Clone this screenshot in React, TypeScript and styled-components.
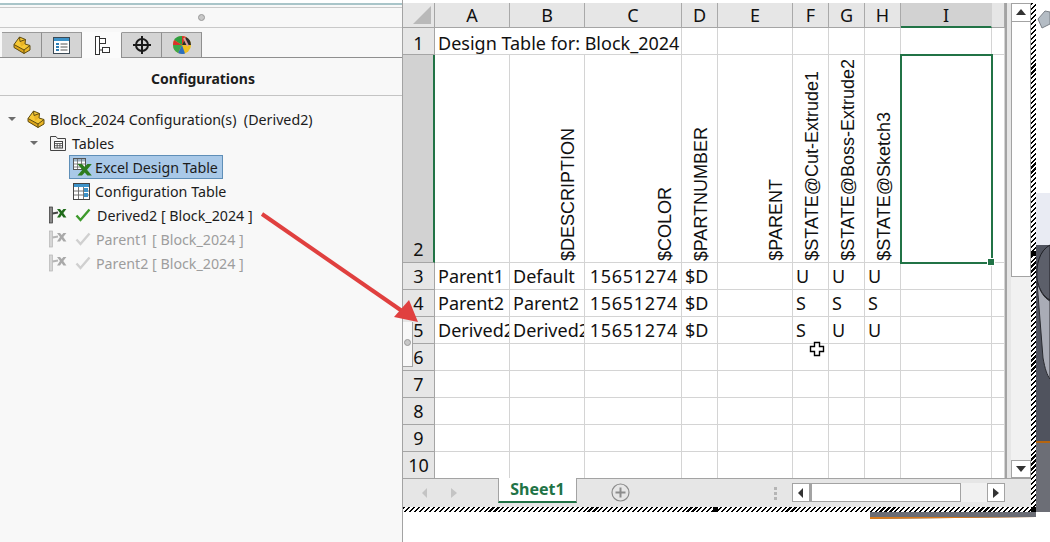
import React from 'react'
import styled, { createGlobalStyle } from 'styled-components'

const GlobalStyle = createGlobalStyle`
    html, body {
        margin: 0;
        padding: 0;
        background: #fff;
        overflow: hidden;
    }
    #root {
        width: 1050px;
        height: 542px;
    }
`

const Page = styled.div`
    position: relative;
    display: flex;
    width: 1050px;
    height: 542px;
    overflow: hidden;
`

/* left feature manager panel */
const Panel = styled.div`
    width: 403px;
    box-sizing: border-box;
    padding-top: 3px;
    background: linear-gradient(#fff 3px, #f8f8f8 3px);
    border-right: 1px solid #a3a3a3;
    font-family: 'Noto Sans', sans-serif;
    color: #1c1c1c;
`

const PanelTop = styled.div`
    height: 5px;
    box-sizing: border-box;
    border-top: 2px solid #a9c5c9;
    border-bottom: 1px solid #c9c9c9;
`

const Grip = styled.div`
    display: flex;
    align-items: center;
    justify-content: center;
    height: 20px;
    box-sizing: border-box;
    border-bottom: 1px solid #c9c9c9;
`

const GripDot = styled.span`
    width: 5px;
    height: 5px;
    border-radius: 50%;
    background: #c8c8c8;
    border: 1px solid #9a9a9a;
`

const TabBar = styled.div`
    display: flex;
    height: 26px;
    margin-top: 4px;
    padding-left: 2px;
    border-bottom: 1px solid #8f8f8f;
    box-sizing: border-box;
`

const Tab = styled.div<{ $active?: boolean }>`
    display: flex;
    align-items: center;
    justify-content: center;
    width: 40px;
    height: ${p => (p.$active ? '26px' : '25px')};
    box-sizing: border-box;
    background: ${p => (p.$active ? '#fbfbfb' : '#d4d4d4')};
    border-top: 1px solid ${p => (p.$active ? '#fbfbfb' : '#9a9a9a')};
    border-right: 1px solid #8f8f8f;
`

const PanelTitle = styled.div`
    height: 38px;
    line-height: 41px;
    box-sizing: border-box;
    padding-left: 4px;
    text-align: center;
    font-size: 14px;
    font-weight: 700;
    border-bottom: 1px solid #c4c4c4;
`

const Tree = styled.div`
    display: flex;
    flex-direction: column;
    padding-top: 11px;
`

const TreeRow = styled.div<{ $indent: number; $muted?: boolean }>`
    display: flex;
    align-items: center;
    height: 24px;
    padding-left: ${p => p.$indent}px;
    font-size: 14.25px;
    white-space: pre;
    color: ${p => (p.$muted ? '#9d9d9d' : '#1c1c1c')};
`

const Caret = styled.span`
    width: 0;
    height: 0;
    margin-right: 11px;
    border-left: 4px solid transparent;
    border-right: 4px solid transparent;
    border-top: 4px solid #6d6d6d;
`

const RowLabel = styled.span<{ $gap: number }>`
    margin-left: ${p => p.$gap}px;
`

const CheckSlot = styled.span`
    display: flex;
    margin-left: 8px;
`

const SelectedItem = styled.div`
    display: flex;
    align-items: center;
    width: 154px;
    height: 24px;
    box-sizing: border-box;
    margin-left: -3px;
    padding-left: 2px;
    background: #a9c9e8;
    border: 1px solid #5f8fb8;
`

/* workspace on the right */
const Workspace = styled.div`
    flex: 1;
    display: flex;
    flex-direction: column;
`

const Stage = styled.div`
    display: flex;
    margin-top: 3px;
    height: 509px;
`

const Hatched = styled.div`
    position: relative;
    width: 633px;
    height: 509px;
    box-sizing: border-box;
    padding: 0 5px 5px 0;
    background: repeating-linear-gradient(135deg, #000 0 1.5px, #fff 1.5px 3.5px);
`

const HatchHandle = styled.span<{ $left: number; $top: number }>`
    position: absolute;
    left: ${p => p.$left}px;
    top: ${p => p.$top}px;
    width: 5px;
    height: 5px;
    background: #000;
`

const ExcelWindow = styled.div`
    position: relative;
    display: flex;
    flex-direction: column;
    width: 628px;
    height: 504px;
    background: #e6e6e6;
    overflow: hidden;
`

const ExcelMain = styled.div`
    display: flex;
    height: 475px;
`

const SheetGrid = styled.div`
    position: relative;
    display: grid;
    grid-template-columns: 32px 75px 75px 97px 36px 75px 36px 36px 36px 91px 13px;
    grid-template-rows: 25px 27px 208px repeat(8, 27px);
    width: 602px;
    height: 475px;
    overflow: hidden;
    background: #fff;
    border-right: 2px solid #a3a3a3;
    box-sizing: content-box;
    font-family: 'Noto Sans', sans-serif;
    font-size: 18px;
    color: #111;
`

const Corner = styled.div`
    position: relative;
    background: #e6e6e6;
    border-right: 1px solid #a5a5a5;
    border-bottom: 1px solid #a5a5a5;
`

const CornerMark = styled.span`
    position: absolute;
    right: 3px;
    bottom: 3px;
    width: 0;
    height: 0;
    border-left: 18px solid transparent;
    border-bottom: 18px solid #b9b9b9;
`

const ColHead = styled.div<{ $selected?: boolean }>`
    display: flex;
    align-items: center;
    justify-content: center;
    box-sizing: border-box;
    background: ${p => (p.$selected ? '#d2d2d2' : '#e6e6e6')};
    border-right: 1px solid ${p => (p.$selected ? '#d2d2d2' : '#a9a9a9')};
    border-bottom: ${p => (p.$selected ? '2px solid #217346' : '1px solid #a5a5a5')};
`

const RowHead = styled.div<{ $selected?: boolean; $bottom?: boolean }>`
    display: flex;
    align-items: ${p => (p.$bottom ? 'flex-end' : 'center')};
    justify-content: center;
    box-sizing: border-box;
    background: ${p => (p.$selected ? '#d2d2d2' : '#e6e6e6')};
    border-right: ${p => (p.$selected ? '2px solid #217346' : '1px solid #a5a5a5')};
    border-bottom: 1px solid #a5a5a5;
    padding-left: ${p => (p.$selected ? '1px' : '0')};
    line-height: 25px;
`

const TitleHead = styled(RowHead)`
    line-height: 22px;
`

const Cell = styled.div<{ $span?: number; $right?: boolean }>`
    grid-column: span ${p => p.$span ?? 1};
    display: flex;
    align-items: center;
    justify-content: ${p => (p.$right ? 'flex-end' : 'flex-start')};
    box-sizing: border-box;
    padding: 0 3px;
    white-space: pre;
    overflow: hidden;
    letter-spacing: ${p => (p.$right ? '0.75px' : 'normal')};
    border-right: 1px solid #d4d4d4;
    border-bottom: 1px solid #d4d4d4;
`

const TitleCell = styled(Cell)`
    align-items: flex-end;
    line-height: 22px;
`

const RotatedCell = styled(Cell)`
    align-items: flex-end;
    justify-content: flex-end;
    padding: 0 6px 1px 0;
`

const RotatedText = styled.span`
    writing-mode: vertical-rl;
    transform: rotate(180deg);
    font-family: 'Liberation Sans', Arial, sans-serif;
    font-size: 18px;
    line-height: 20px;
`

const Selection = styled.div`
    position: absolute;
    left: 497px;
    top: 51px;
    width: 93px;
    height: 210px;
    box-sizing: border-box;
    border: 2px solid #217346;
`

const FillHandle = styled.span`
    position: absolute;
    right: -4px;
    bottom: -4px;
    width: 6px;
    height: 6px;
    background: #217346;
    border: 1px solid #fff;
`

const VScroll = styled.div`
    display: flex;
    flex-direction: column;
    width: 20px;
    margin-left: 4px;
    background: #f1f1f1;
`

const ScrollBtn = styled.div<{ $w?: number; $h?: number }>`
    display: flex;
    align-items: center;
    justify-content: center;
    flex: none;
    width: ${p => p.$w ?? 20}px;
    height: ${p => p.$h ?? 19}px;
    box-sizing: border-box;
    background: #fff;
    border: 1px solid #a3a3a3;
`

const VThumb = styled.div`
    height: 255px;
    box-sizing: border-box;
    background: #fff;
    border: 1px solid #a3a3a3;
    border-top: 0;
`

const VTrack = styled.div`
    flex: 1;
`

const SheetBar = styled.div`
    display: flex;
    align-items: flex-start;
    height: 29px;
    background: #e6e6e6;
    border-top: 1px solid #a3a3a3;
    box-sizing: border-box;
`

const SheetNav = styled.div`
    display: flex;
    align-items: center;
    gap: 17px;
    width: 95px;
    height: 27px;
    padding-left: 16px;
    box-sizing: border-box;
`

const SheetTab = styled.div`
    width: 79px;
    height: 25px;
    box-sizing: border-box;
    margin-top: -1px;
    background: #fff;
    border: 1px solid #a3a3a3;
    border-top: 0;
    border-bottom: 2px solid #217346;
    text-align: center;
    font-family: 'Noto Sans', sans-serif;
    font-size: 16px;
    font-weight: 700;
    line-height: 22px;
    color: #217346;
`

const AddSheet = styled.div`
    display: flex;
    width: 19px;
    height: 19px;
    margin: 4px 0 0 34px;
`

const SplitDots = styled.div`
    display: flex;
    flex-direction: column;
    gap: 2px;
    margin: 8px 0 0 144px;
`

const SplitDot = styled.span`
    width: 3px;
    height: 3px;
    background: #b5b5b5;
`

const HScroll = styled.div`
    display: flex;
    width: 213px;
    height: 19px;
    margin: 4px 0 0 15px;
    background: #f1f1f1;
`

const HThumb = styled.div`
    width: 151px;
    height: 19px;
    box-sizing: border-box;
    background: #fff;
    border: 1px solid #a3a3a3;
    border-left-width: 2px;
`

const HTrack = styled.div`
    flex: 1;
`

const ViewSide = styled.svg`
    display: block;
    width: 14px;
    height: 509px;
    flex: none;
`

const UnderStrip = styled.div`
    width: 166px;
    height: 7px;
    margin-left: 467px;
    box-sizing: border-box;
    background: #6a6c74;
    border-bottom: 2px solid #d87a1a;
    clip-path: polygon(0 0, 100% 0, 100% 70%, 0 100%);
`

const PanelSash = styled.div`
    position: absolute;
    left: 403px;
    top: 322px;
    width: 10px;
    height: 45px;
    box-sizing: border-box;
    background: #f8f8f8;
    border-right: 1px solid #a3a3a3;
    border-bottom: 1px solid #a3a3a3;
`

const SashDot = styled.span`
    position: absolute;
    left: 1px;
    top: 17px;
    width: 5px;
    height: 5px;
    border-radius: 50%;
    background: #c8c8c8;
    border: 1px solid #9a9a9a;
`

const Overlay = styled.svg`
    position: absolute;
    pointer-events: none;
`

const BlockIcon = () => (
    <svg width="18" height="19" viewBox="0 0 18 19">
        <path d="M1 8.5 L6.5 1 L12.5 3.5 L12 8 L17 9.5 L17 14 L11 17.5 L1 11.5 Z" fill="#f6c835" />
        <path d="M1 8.5 L11 14 L11 17.5 L1 11.5 Z" fill="#dca41a" />
        <path d="M11 14 L17 9.5 L17 14 L11 17.5 Z" fill="#e9b424" />
        <path d="M7 5.5 L12.5 3.5 L12 8 L8 10.8 Z" fill="#e9b424" />
        <path d="M1 8.5 L6.5 1 L12.5 3.5 L12 8 L17 9.5 L17 14 L11 17.5 L1 11.5 Z M1 8.5 L11 14 L17 9.5 M11 14 L11 17.5 M6.5 1 L7 5.5 M7 5.5 L12.5 3.5" fill="none" stroke="#5f4c12" strokeWidth="1" strokeLinejoin="round" />
    </svg>
)

const ListIcon = () => (
    <svg width="19" height="19" viewBox="0 0 19 19">
        <rect x="1.5" y="1.5" width="16" height="16" fill="#fff" stroke="#3c4a55" />
        <rect x="2" y="2" width="15" height="3" fill="#3d93c9" />
        <path d="M4 8h3M4 11h3M4 14h3" stroke="#2f7fb5" strokeWidth="2" />
        <path d="M8.5 8h7M8.5 11h7M8.5 14h7" stroke="#555" strokeWidth="1" />
    </svg>
)

const ConfigIcon = () => (
    <svg width="16" height="19" viewBox="0 0 16 19" fill="#fff" stroke="#333" strokeWidth="1">
        <rect x="1.5" y="0.5" width="4" height="18" />
        <rect x="5.5" y="2.5" width="6" height="5" />
        <rect x="8.5" y="11.5" width="7" height="5" />
        <path d="M5.5 14h3" fill="none" />
    </svg>
)

const TargetIcon = () => (
    <svg width="20" height="20" viewBox="0 0 20 20" fill="none" stroke="#1a1a1a">
        <circle cx="10" cy="10" r="6" strokeWidth="2" />
        <path d="M10 1v18M1 10h18" strokeWidth="2" />
    </svg>
)

const AppearanceIcon = () => (
    <svg width="20" height="20" viewBox="0 0 20 20">
        <circle cx="10" cy="10" r="9" fill="#f0c020" />
        <path d="M10 10 L2 5 A9 9 0 0 1 10 1 Z" fill="#2f9e3f" />
        <path d="M10 10 L10 1 A9 9 0 0 1 14 2 Z" fill="#d8332a" />
        <path d="M10 10 L14 2 A9 9 0 0 1 19 10 Z" fill="#2a2a2a" />
        <path d="M10 10 L1 10 A9 9 0 0 1 2 5 Z" fill="#d8332a" />
        <path d="M10 10 L1 10 A9 9 0 0 0 6 18 Z" fill="#3aa84a" />
        <path d="M10 10 L6 18 A9 9 0 0 0 13 18.5 Z" fill="#2c6fc0" />
        <path d="M12 3 L16 11" stroke="#d9a0a0" strokeWidth="2" />
    </svg>
)

const FolderTableIcon = () => (
    <svg width="18" height="18" viewBox="0 0 18 18">
        <path d="M1.5 16.5 V2.5 H7 L8.5 4.5 H16.5 V16.5 Z" fill="#f4f4f4" stroke="#444" />
        <rect x="5.5" y="7.5" width="8" height="6.5" fill="#fff" stroke="#444" />
        <path d="M5.5 9.5h8M5.5 11.7h8M8.2 9.5v4.5M10.9 9.5v4.5" stroke="#444" strokeWidth="0.8" />
    </svg>
)

const ExcelTableIcon = () => (
    <svg width="20" height="20" viewBox="0 0 20 20">
        <rect x="1.5" y="1.5" width="12" height="11" fill="#fff" stroke="#555" />
        <rect x="2" y="2" width="11" height="2.5" fill="#9fb4c4" />
        <path d="M1.5 7h12M1.5 10h12M5.5 2v10M9.5 2v10" stroke="#666" strokeWidth="0.8" />
        <path d="M5.5 7 L10 7 L12.7 10 L15.4 7 L19.8 7 L15 12.7 L19.8 18.5 L15.4 18.5 L12.7 15.4 L10 18.5 L5.5 18.5 L10.4 12.7 Z" fill="#2d7d1f" />
    </svg>
)

const ConfigTableIcon = () => (
    <svg width="19" height="19" viewBox="0 0 19 19">
        <rect x="1.5" y="1.5" width="16" height="16" fill="#fff" stroke="#444" />
        <rect x="2" y="2" width="15" height="3" fill="#3d93c9" />
        <path d="M6.5 5v12M11.5 5v12M2 9h15M2 13h15" stroke="#666" strokeWidth="0.9" />
        <rect x="12" y="6" width="4" height="4" fill="#3d93c9" />
        <rect x="12" y="11" width="4" height="4" fill="#3d93c9" />
    </svg>
)

const FlagIcon = ({ muted }: { muted?: boolean }) => (
    <svg width="18" height="18" viewBox="0 0 18 18">
        <rect x="0.5" y="1" width="3" height="16" fill={muted ? '#d6d6d6' : '#8a8a8a'} stroke={muted ? '#b5b5b5' : '#333'} strokeWidth="0.7" />
        <path d="M3.5 7.5 L9 6.5" stroke={muted ? '#b5b5b5' : '#444'} strokeWidth="2" />
        <path d="M8 3 L11 3 L12.7 5.1 L14.4 3 L17.4 3 L14.3 7 L17.4 11.5 L14.4 11.5 L12.7 9 L11 11.5 L8 11.5 L11 7 Z" fill={muted ? '#a9a9a9' : '#1f6b1a'} />
    </svg>
)

const CheckIcon = ({ muted }: { muted?: boolean }) => (
    <svg width="16" height="14" viewBox="0 0 16 14" fill="none">
        <path d="M1.5 7.5 L5.5 12 L14.5 1.5" stroke={muted ? '#d0d0d0' : '#3d9a2b'} strokeWidth="2.4" />
    </svg>
)

const Triangle = ({ dir, color = '#333' }: { dir: 'up' | 'down' | 'left' | 'right'; color?: string }) => {
    const points = {
        up: '1,8 11,8 6,2',
        down: '1,3 11,3 6,9',
        left: '8,1 8,11 3,6',
        right: '3,1 3,11 9,6',
    }[dir]
    return (
        <svg width="12" height="12" viewBox="0 0 12 12">
            <polygon points={points} fill={color} />
        </svg>
    )
}

const colNames = ['A', 'B', 'C', 'D', 'E', 'F', 'G', 'H', 'I', '']

const rotated = [
    '',
    '$DESCRIPTION',
    '$COLOR',
    '$PARTNUMBER',
    '$PARENT',
    '$STATE@Cut-Extrude1',
    '$STATE@Boss-Extrude2',
    '$STATE@Sketch3',
    '',
    '',
]

const dataRows = [
    ['Parent1', 'Default', '15651274', '$D', '', 'U', 'U', 'U', '', ''],
    ['Parent2', 'Parent2', '15651274', '$D', '', 'S', 'S', 'S', '', ''],
    ['Derived2', 'Derived2', '15651274', '$D', '', 'S', 'U', 'U', '', ''],
]

const emptyRows = [6, 7, 8, 9, 10]

const App = () => {
    return (
        <Page>
            <GlobalStyle />
            <Panel>
                <PanelTop />
                <Grip><GripDot /></Grip>
                <TabBar>
                    <Tab><BlockIcon /></Tab>
                    <Tab><ListIcon /></Tab>
                    <Tab $active><ConfigIcon /></Tab>
                    <Tab><TargetIcon /></Tab>
                    <Tab><AppearanceIcon /></Tab>
                </TabBar>
                <PanelTitle>Configurations</PanelTitle>
                <Tree>
                    <TreeRow $indent={8}>
                        <Caret />
                        <BlockIcon />
                        <RowLabel $gap={5}>Block_2024 Configuration(s)  (Derived2)</RowLabel>
                    </TreeRow>
                    <TreeRow $indent={30}>
                        <Caret />
                        <FolderTableIcon />
                        <RowLabel $gap={5}>Tables</RowLabel>
                    </TreeRow>
                    <TreeRow $indent={72}>
                        <SelectedItem>
                            <ExcelTableIcon />
                            <RowLabel $gap={3}>Excel Design Table</RowLabel>
                        </SelectedItem>
                    </TreeRow>
                    <TreeRow $indent={72}>
                        <ConfigTableIcon />
                        <RowLabel $gap={4}>Configuration Table</RowLabel>
                    </TreeRow>
                    <TreeRow $indent={49}>
                        <FlagIcon />
                        <CheckSlot><CheckIcon /></CheckSlot>
                        <RowLabel $gap={6}>{'Derived2 [ Block_2024 ]'}</RowLabel>
                    </TreeRow>
                    <TreeRow $indent={49} $muted>
                        <FlagIcon muted />
                        <CheckSlot><CheckIcon muted /></CheckSlot>
                        <RowLabel $gap={5}>{'Parent1 [ Block_2024 ]'}</RowLabel>
                    </TreeRow>
                    <TreeRow $indent={49} $muted>
                        <FlagIcon muted />
                        <CheckSlot><CheckIcon muted /></CheckSlot>
                        <RowLabel $gap={5}>{'Parent2 [ Block_2024 ]'}</RowLabel>
                    </TreeRow>
                </Tree>
            </Panel>

            <Workspace>
                <Stage>
                    <Hatched>
                        <ExcelWindow>
                            <ExcelMain>
                                <SheetGrid>
                                    <Corner><CornerMark /></Corner>
                                    {colNames.map((c, i) => (
                                        <ColHead key={i} $selected={c === 'I'}>{c}</ColHead>
                                    ))}

                                    <TitleHead $bottom>1</TitleHead>
                                    <TitleCell $span={3}>Design Table for: Block_2024</TitleCell>
                                    {colNames.slice(3).map((_, i) => <Cell key={i} />)}

                                    <RowHead $selected $bottom>2</RowHead>
                                    {rotated.map((t, i) => (
                                        <RotatedCell key={i}>
                                            {t && <RotatedText>{t}</RotatedText>}
                                        </RotatedCell>
                                    ))}

                                    {dataRows.map((row, r) => (
                                        <React.Fragment key={r}>
                                            <RowHead>{r + 3}</RowHead>
                                            {row.map((v, i) => (
                                                <Cell key={i} $right={i === 2}>{v}</Cell>
                                            ))}
                                        </React.Fragment>
                                    ))}

                                    {emptyRows.map(n => (
                                        <React.Fragment key={n}>
                                            <RowHead>{n}</RowHead>
                                            {colNames.map((_, i) => <Cell key={i} />)}
                                        </React.Fragment>
                                    ))}

                                    <Selection><FillHandle /></Selection>
                                </SheetGrid>
                                <VScroll>
                                    <ScrollBtn><Triangle dir="up" /></ScrollBtn>
                                    <VThumb />
                                    <VTrack />
                                    <ScrollBtn $h={18}><Triangle dir="down" /></ScrollBtn>
                                </VScroll>
                            </ExcelMain>
                            <SheetBar>
                                <SheetNav>
                                    <Triangle dir="left" color="#c4c4c4" />
                                    <Triangle dir="right" color="#c4c4c4" />
                                </SheetNav>
                                <SheetTab>Sheet1</SheetTab>
                                <AddSheet>
                                    <svg width="19" height="19" viewBox="0 0 19 19" fill="none" stroke="#8c8c8c">
                                        <circle cx="9.5" cy="9.5" r="8.5" strokeWidth="1.2" />
                                        <path d="M9.5 4.5v10M4.5 9.5h10" strokeWidth="2" />
                                    </svg>
                                </AddSheet>
                                <SplitDots>
                                    <SplitDot />
                                    <SplitDot />
                                    <SplitDot />
                                </SplitDots>
                                <HScroll>
                                    <ScrollBtn $w={18}><Triangle dir="left" /></ScrollBtn>
                                    <HThumb />
                                    <HTrack />
                                    <ScrollBtn $w={18}><Triangle dir="right" /></ScrollBtn>
                                </HScroll>
                            </SheetBar>
                        </ExcelWindow>
                        <HatchHandle $left={310} $top={504} />
                        <HatchHandle $left={628} $top={248} />
                        <HatchHandle $left={628} $top={504} />
                    </Hatched>
                    <ViewSide viewBox="0 0 14 509">
                        <rect width="14" height="242" fill="#fff" />
                        <rect y="190" width="14" height="52" fill="#e9ebf3" />
                        <rect y="242" width="14" height="196" fill="#50535e" />
                        <rect y="438" width="14" height="2" fill="#b5650f" />
                        <rect y="440" width="14" height="69" fill="#6c6e76" />
                        <path d="M14 242 C3 248 0 262 1 276 C3 287 8 294 14 297 Z" fill="#5c5f6a" stroke="#1e1f24" />
                        <path d="M1 279 L7 355 C9 366 11 372 14 376 L14 298 C8 295 4 288 1 279 Z" fill="#a9acb6" stroke="#2a2b30" />
                        <path d="M2 16 L9 8 L14 9 L14 21 L6 25 Z" fill="#b4bcc4" stroke="#7b8087" />
                    </ViewSide>
                </Stage>
                <UnderStrip />
            </Workspace>

            <PanelSash><SashDot /></PanelSash>

            <Overlay style={{ left: 255, top: 205 }} width="175" height="130" viewBox="255 205 175 130">
                <path d="M262 214 L402 311" stroke="#e0403f" strokeWidth="4" fill="none" />
                <polygon points="418,322 394,317 409,300" fill="#e0403f" />
            </Overlay>

            <Overlay style={{ left: 809, top: 341 }} width="16" height="16" viewBox="0 0 16 16">
                <path d="M5.5 1.5 H10.5 V5.5 H14.5 V10.5 H10.5 V14.5 H5.5 V10.5 H1.5 V5.5 H5.5 Z" fill="#fff" stroke="#000" strokeWidth="1.4" />
            </Overlay>
        </Page>
    )
}

export default App
